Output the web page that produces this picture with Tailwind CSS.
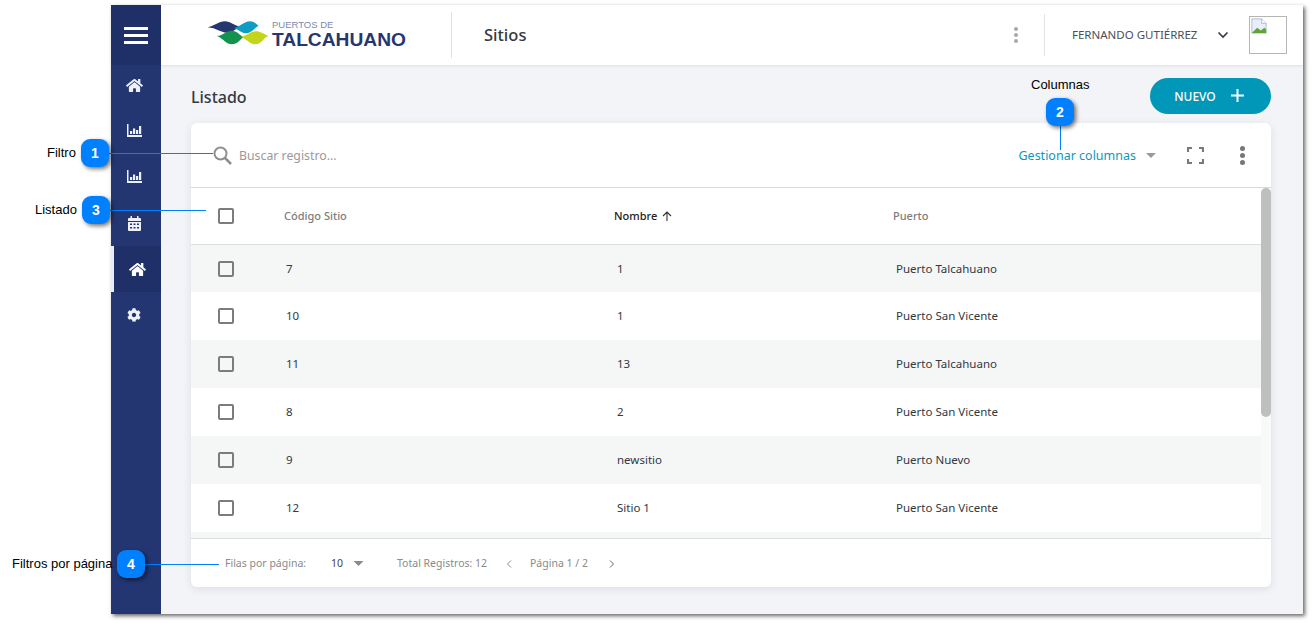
<!DOCTYPE html>
<html lang="en">
<head>
    <meta charset="UTF-8">
    <title>Sitios</title>
    <script src="https://cdn.jsdelivr.net/npm/@tailwindcss/browser@4"></script>
</head>
<body class="bg-white font-['Noto_Sans',sans-serif] overflow-hidden h-[623px] relative">
    <!-- app window -->
    <div class="ml-[111px] mt-[5px] w-[1192px] h-[609px] flex bg-[#f3f4f7] shadow-[2px_2px_4px_rgba(0,0,0,0.6)]">
        <!-- sidebar -->
        <div class="w-[50px] shrink-0 bg-[#233672] flex flex-col text-white">
            <div class="h-[60px] bg-[#1f2f68] flex items-center justify-center">
                <div class="w-[24px] flex flex-col gap-[4px]">
                    <div class="h-[3px] bg-white"></div>
                    <div class="h-[3px] bg-white"></div>
                    <div class="h-[3px] bg-white"></div>
                </div>
            </div>
            <div class="h-[40px] flex items-center justify-center pr-[4px]">
                <svg class="w-[17px] h-[15px]" viewBox="0 0 576 512" fill="#eef1fb"><path d="M280.37 148.26L96 300.11V464a16 16 0 0 0 16 16l112.06-.29a16 16 0 0 0 15.92-16V368a16 16 0 0 1 16-16h64a16 16 0 0 1 16 16v95.64a16 16 0 0 0 16 16.05L464 480a16 16 0 0 0 16-16V300L295.67 148.26a12.19 12.19 0 0 0-15.3 0zM571.6 251.47L488 182.56V44.05a12 12 0 0 0-12-12h-56a12 12 0 0 0-12 12v72.61L318.47 43a48 48 0 0 0-61 0L4.34 251.47a12 12 0 0 0-1.6 16.9l25.5 31A12 12 0 0 0 45.15 301l235.22-193.74a12.19 12.19 0 0 1 15.3 0L530.9 301a12 12 0 0 0 16.9-1.6l25.5-31a12 12 0 0 0-1.7-16.93z"/></svg>
            </div>
            <div class="h-[50px] flex items-center justify-center pr-[4px]">
                <svg class="w-[15px] h-[13px]" viewBox="0 0 15 13" fill="#eef1fb"><path d="M0 0h1.500v11H15v2H0z"/><rect x="3" y="7" width="2.200" height="3"/><rect x="6" y="4.500" width="2.200" height="5.500"/><rect x="9" y="6" width="2.200" height="4"/><rect x="12" y="2" width="2.200" height="8"/></svg>
            </div>
            <div class="h-[42px] flex items-center justify-center pr-[4px]">
                <svg class="w-[15px] h-[13px]" viewBox="0 0 15 13" fill="#eef1fb"><path d="M0 0h1.500v11H15v2H0z"/><rect x="3" y="7" width="2.200" height="3"/><rect x="6" y="4.500" width="2.200" height="5.500"/><rect x="9" y="6" width="2.200" height="4"/><rect x="12" y="2" width="2.200" height="8"/></svg>
            </div>
            <div class="h-[49px] flex items-center justify-center pr-[4px]">
                <svg class="w-[13px] h-[15px] mt-[3px]" viewBox="0 0 13 15" fill="#eef1fb"><path d="M2.500 0h1.500v2h5V0h1.500v2H12a1 1 0 0 1 1 1v2H0V3a1 1 0 0 1 1-1h1.500z"/><path fill-rule="evenodd" d="M0 6h13v8a1 1 0 0 1-1 1H1a1 1 0 0 1-1-1zM2 7.500v1.500h2V7.500zM5.500 7.500v1.500h2V7.500zM9 7.500v1.500h2V7.500zM2 11v1.500h2V11zM5.500 11v1.500h2V11zM9 11v1.500h2V11z"/></svg>
            </div>
            <div class="h-[46px] flex items-center justify-center bg-[#1f2f68] border-l-[3px] border-[#e8ecf7]">
                <svg class="w-[17px] h-[15px]" viewBox="0 0 576 512" fill="#ffffff"><path d="M280.37 148.26L96 300.11V464a16 16 0 0 0 16 16l112.06-.29a16 16 0 0 0 15.92-16V368a16 16 0 0 1 16-16h64a16 16 0 0 1 16 16v95.64a16 16 0 0 0 16 16.05L464 480a16 16 0 0 0 16-16V300L295.67 148.26a12.19 12.19 0 0 0-15.3 0zM571.6 251.47L488 182.56V44.05a12 12 0 0 0-12-12h-56a12 12 0 0 0-12 12v72.61L318.47 43a48 48 0 0 0-61 0L4.34 251.47a12 12 0 0 0-1.6 16.9l25.5 31A12 12 0 0 0 45.15 301l235.22-193.74a12.19 12.19 0 0 1 15.3 0L530.9 301a12 12 0 0 0 16.9-1.6l25.5-31a12 12 0 0 0-1.7-16.93z"/></svg>
            </div>
            <div class="h-[46px] flex items-center justify-center pr-[4px]">
                <svg class="w-[14px] h-[14px]" viewBox="0 0 512 512" fill="#eef1fb"><path d="M487.4 315.7l-42.6-24.6c4.3-23.2 4.3-47 0-70.2l42.6-24.6c4.9-2.8 7.1-8.6 5.5-14-11.1-35.6-30-67.8-54.7-94.6-3.8-4.1-10-5.1-14.8-2.3L380.8 110c-17.9-15.4-38.5-27.3-60.8-35.1V25.8c0-5.6-3.9-10.5-9.4-11.7-36.7-8.2-74.3-7.8-109.2 0-5.5 1.2-9.4 6.1-9.4 11.7V75c-22.2 7.9-42.8 19.8-60.8 35.1L88.7 85.5c-4.9-2.8-11-1.9-14.8 2.3-24.7 26.7-43.6 58.9-54.7 94.6-1.7 5.4.6 11.2 5.5 14L67.3 221c-4.3 23.2-4.3 47 0 70.2l-42.6 24.6c-4.9 2.8-7.1 8.6-5.5 14 11.1 35.6 30 67.8 54.7 94.6 3.8 4.1 10 5.1 14.8 2.3l42.6-24.6c17.9 15.4 38.5 27.3 60.8 35.1v49.2c0 5.6 3.9 10.5 9.4 11.7 36.7 8.2 74.3 7.8 109.2 0 5.5-1.2 9.4-6.1 9.4-11.7v-49.2c22.2-7.9 42.8-19.8 60.8-35.1l42.6 24.6c4.9 2.8 11 1.9 14.8-2.3 24.7-26.7 43.6-58.9 54.7-94.6 1.5-5.5-.7-11.3-5.6-14.1zM256 336c-44.1 0-80-35.9-80-80s35.9-80 80-80 80 35.9 80 80-35.9 80-80 80z"/></svg>
            </div>
        </div>

        <div class="flex-1 flex flex-col min-w-0">
            <!-- header -->
            <div class="h-[61px] bg-white flex items-center border-b border-[#e6e7ea] shadow-[0_1px_2px_rgba(0,0,0,0.05)]">
                <div class="w-[291px] h-[46px] flex items-center border-r border-[#dfe1e5] pl-[46px]">
                    <svg class="w-[62px] h-[25px] mb-[3px]" viewBox="21 27 185 75">
                        <path fill="#26376f" d="M22 46C40 44 55 28 75 28C90 28 100 40 120 44C105 52 95 62 80 62C60 62 50 48 22 46z"/>
                        <path fill="#0d9cc2" d="M100 48C120 46 130 28 150 28C158 28 165 32 175 42C165 44 158 62 138 64C125 64 115 52 100 48z"/>
                        <path fill="#14934f" d="M50 72C70 70 78 56 95 56C110 56 118 68 130 76C120 80 115 97 95 97C78 97 70 80 50 72z"/>
                        <path fill="#c2d41c" d="M122 74C140 72 150 58 168 58C180 58 190 66 205 72C190 76 185 97 165 97C150 97 140 82 122 74z"/>
                    </svg>
                    <div class="ml-[3px] flex flex-col mb-[3px]">
                        <span class="text-[9.500px] leading-[11px] text-[#7d88ad] font-['Liberation_Sans',sans-serif]">PUERTOS DE</span>
                        <span class="text-[19.200px] leading-[19px] font-bold text-[#26376f] font-['Liberation_Sans',sans-serif]">TALCAHUANO</span>
                    </div>
                </div>
                <div class="ml-[32px] mt-[1px] text-[16.500px] font-medium text-[#333842]">Sitios</div>
                <div class="ml-auto w-[5px] flex flex-col gap-[2px] items-center mr-[26px]">
                    <div class="w-[4px] h-[4px] rounded-full bg-[#a8a8a8]"></div>
                    <div class="w-[4px] h-[4px] rounded-full bg-[#a8a8a8]"></div>
                    <div class="w-[4px] h-[4px] rounded-full bg-[#a8a8a8]"></div>
                </div>
                <div class="h-[42px] border-l border-[#e1e3e6] flex items-center pl-[27px]">
                    <span class="text-[11.500px] text-[#4a4f5c] w-[126px] whitespace-nowrap">FERNANDO GUTIÉRREZ</span>
                    <svg class="w-[12px] h-[8px] ml-[19px]" viewBox="0 0 12 8" fill="none" stroke="#333842" stroke-width="1.600"><path d="M1.500 1.500 6 6l4.500-4.500"/></svg>
                    <div class="w-[38px] h-[38px] ml-[20px] mr-[16px] border border-[#b5b5b5] self-center relative">
                        <svg class="absolute left-[1px] top-[1px] w-[16px] h-[16px]" viewBox="0 0 18 18">
                            <path d="M1 1h11l5 5v11H1z" fill="#e8eefb" stroke="#b0b5c0"/>
                            <path d="M1 17l6-6 4 3 4-3 2 2v4z" fill="#5da53a"/>
                            <path d="M12 1v5h5" fill="#fff" stroke="#b0b5c0"/>
                        </svg>
                    </div>
                </div>
            </div>

            <!-- content -->
            <div class="flex-1 px-[30px] flex flex-col">
                <div class="h-[57px] w-[1080px] flex items-center justify-between">
                    <h1 class="text-[16px] font-medium text-[#333842] mt-[4px]">Listado</h1>
                    <button class="w-[121px] h-[36px] mt-[2px] pr-[3px] rounded-full bg-[#0097b9] text-white flex items-center justify-center gap-[15px] text-[12px] font-medium">
                        <span class="mt-[2px]">NUEVO</span>
                        <svg class="w-[13px] h-[13px]" viewBox="0 0 13 13" fill="none" stroke="#fff" stroke-width="2"><path d="M6.500 0v13M0 6.500h13"/></svg>
                    </button>
                </div>

                <!-- card -->
                <div class="w-[1080px] h-[464px] bg-white rounded-[6px] shadow-[0_2px_8px_rgba(60,70,120,0.12)] flex flex-col overflow-hidden">
                    <div class="h-[65px] shrink-0 border-b border-[#d8d9dc] flex items-center pl-[22px]">
                        <svg class="w-[19px] h-[19px]" viewBox="0 0 19 19" fill="none" stroke="#8f8f8f" stroke-width="2"><circle cx="7.500" cy="7.500" r="6"/><path d="M12 12l6 6" stroke-width="2.500"/></svg>
                        <span class="ml-[7px] mt-[2px] text-[12.300px] text-[#9a9a9a]">Buscar registro...</span>
                        <span class="ml-auto mt-[2px] text-[12.500px] text-[#0f97b8]">Gestionar columnas</span>
                        <svg class="w-[10px] h-[5px] ml-[10px]" viewBox="0 0 10 5" fill="#9a9a9a"><path d="M0 0h10L5 5z"/></svg>
                        <svg class="w-[17px] h-[17px] ml-[31px]" viewBox="0 0 17 17" fill="none" stroke="#7a7a7a" stroke-width="2.200"><path d="M1 5V1h4M12 1h4v4M16 12v4h-4M5 16H1v-4"/></svg>
                        <div class="w-[6px] flex flex-col gap-[2px] ml-[36px] mr-[25px]">
                            <div class="w-[5px] h-[5px] rounded-full bg-[#777]"></div>
                            <div class="w-[5px] h-[5px] rounded-full bg-[#777]"></div>
                            <div class="w-[5px] h-[5px] rounded-full bg-[#777]"></div>
                        </div>
                    </div>

                    <div class="flex-1 flex min-h-0">
                        <div class="flex-1 min-w-0">
                            <div class="h-[57px] border-b border-[#dcdde0] flex items-center text-[11px] font-medium text-[#7d7d7d]">
                                <div class="ml-[27px] w-[16px] h-[16px] border-2 border-[#7c7c7c] rounded-[2px] shrink-0"></div>
                                <div class="ml-[50px] w-[330px]">Código Sitio</div>
                                <div class="w-[279px] text-[#222] flex items-center gap-[5px]">Nombre
                                    <svg class="w-[10px] h-[10px]" viewBox="0 0 10 10" fill="none" stroke="#333" stroke-width="1.100"><path d="M5 10V1M1 5l4-4 4 4"/></svg>
                                </div>
                                <div>Puerto</div>
                            </div>
                            <div class="h-[47px] bg-[#f5f6f6] flex items-center text-[11.500px] text-[#333842]">
                                <div class="ml-[27px] w-[16px] h-[16px] border-2 border-[#7c7c7c] rounded-[2px] shrink-0"></div>
                                <div class="ml-[52px] w-[331px]">7</div><div class="w-[279px]">1</div><div>Puerto Talcahuano</div>
                            </div>
                            <div class="h-[48px] flex items-center text-[11.500px] text-[#333842]">
                                <div class="ml-[27px] w-[16px] h-[16px] border-2 border-[#7c7c7c] rounded-[2px] shrink-0"></div>
                                <div class="ml-[52px] w-[331px]">10</div><div class="w-[279px]">1</div><div>Puerto San Vicente</div>
                            </div>
                            <div class="h-[48px] bg-[#f5f6f6] flex items-center text-[11.500px] text-[#333842]">
                                <div class="ml-[27px] w-[16px] h-[16px] border-2 border-[#7c7c7c] rounded-[2px] shrink-0"></div>
                                <div class="ml-[52px] w-[331px]">11</div><div class="w-[279px]">13</div><div>Puerto Talcahuano</div>
                            </div>
                            <div class="h-[48px] flex items-center text-[11.500px] text-[#333842]">
                                <div class="ml-[27px] w-[16px] h-[16px] border-2 border-[#7c7c7c] rounded-[2px] shrink-0"></div>
                                <div class="ml-[52px] w-[331px]">8</div><div class="w-[279px]">2</div><div>Puerto San Vicente</div>
                            </div>
                            <div class="h-[48px] bg-[#f5f6f6] flex items-center text-[11.500px] text-[#333842]">
                                <div class="ml-[27px] w-[16px] h-[16px] border-2 border-[#7c7c7c] rounded-[2px] shrink-0"></div>
                                <div class="ml-[52px] w-[331px]">9</div><div class="w-[279px]">newsitio</div><div>Puerto Nuevo</div>
                            </div>
                            <div class="h-[48px] flex items-center text-[11.500px] text-[#333842]">
                                <div class="ml-[27px] w-[16px] h-[16px] border-2 border-[#7c7c7c] rounded-[2px] shrink-0"></div>
                                <div class="ml-[52px] w-[331px]">12</div><div class="w-[279px]">Sitio 1</div><div>Puerto San Vicente</div>
                            </div>
                            <div class="h-[6px] bg-[#f5f6f6]"></div>
                        </div>
                        <!-- scrollbar -->
                        <div class="w-[10px] shrink-0 bg-[#f9f9f9]">
                            <div class="h-[229px] bg-[#bfbfbf] rounded-[5px]"></div>
                        </div>
                    </div>

                    <div class="h-[49px] shrink-0 border-t border-[#dcdde0] pt-[1px] flex items-center text-[10.500px] text-[#8a8a8a]">
                        <span class="ml-[34px] w-[83px] whitespace-nowrap">Filas por página:</span>
                        <span class="ml-[23px] text-[#444]">10</span>
                        <svg class="w-[11px] h-[5px] ml-[10px]" viewBox="0 0 10 5" fill="#8a8a8a"><path d="M0 0h10L5 5z"/></svg>
                        <span class="ml-[33px] w-[90px] whitespace-nowrap">Total Registros: 12</span>
                        <svg class="w-[6px] h-[8px] ml-[19px]" viewBox="0 0 6 8" fill="none" stroke="#8a8a8a"><path d="M5 .5 1.500 4 5 7.500"/></svg>
                        <span class="ml-[18px] w-[62px] whitespace-nowrap">Página 1 / 2</span>
                        <svg class="w-[6px] h-[8px] ml-[17px]" viewBox="0 0 6 8" fill="none" stroke="#666"><path d="M1 .5 4.500 4 1 7.500"/></svg>
                    </div>
                </div>
            </div>
        </div>
    </div>

    <!-- annotation callouts over the screenshot -->
    <span class="absolute left-[47px] top-[146px] text-[13px] leading-[14px] text-black font-['Liberation_Sans',sans-serif]">Filtro</span>
    <div class="absolute left-[109px] top-[153px] w-[104px] h-px bg-[#0080ff]"></div>
    <div class="absolute left-[81px] top-[139px] w-[28px] h-[28px] rounded-[9px] bg-[#0080ff] text-white text-[14px] font-bold flex items-center justify-center shadow-[2px_2px_4px_rgba(0,0,0,0.55)] font-['Liberation_Sans',sans-serif]">1</div>

    <span class="absolute left-[35px] top-[203px] text-[13px] leading-[14px] text-black font-['Liberation_Sans',sans-serif]">Listado</span>
    <div class="absolute left-[110px] top-[210px] w-[96px] h-px bg-[#0080ff]"></div>
    <div class="absolute left-[82px] top-[196px] w-[28px] h-[28px] rounded-[9px] bg-[#0080ff] text-white text-[14px] font-bold flex items-center justify-center shadow-[2px_2px_4px_rgba(0,0,0,0.55)] font-['Liberation_Sans',sans-serif]">3</div>

    <span class="absolute left-[1031px] top-[78px] text-[13px] leading-[14px] text-black font-['Liberation_Sans',sans-serif]">Columnas</span>
    <div class="absolute left-[1060px] top-[126px] w-px h-[24px] bg-[#0080ff]"></div>
    <div class="absolute left-[1046px] top-[98px] w-[28px] h-[28px] rounded-[9px] bg-[#0080ff] text-white text-[14px] font-bold flex items-center justify-center shadow-[2px_2px_4px_rgba(0,0,0,0.55)] font-['Liberation_Sans',sans-serif]">2</div>

    <span class="absolute left-[12px] top-[557px] text-[13px] leading-[14px] text-black font-['Liberation_Sans',sans-serif] whitespace-nowrap">Filtros por página</span>
    <div class="absolute left-[145px] top-[564px] w-[74px] h-px bg-[#0080ff]"></div>
    <div class="absolute left-[117px] top-[550px] w-[28px] h-[28px] rounded-[9px] bg-[#0080ff] text-white text-[14px] font-bold flex items-center justify-center shadow-[2px_2px_4px_rgba(0,0,0,0.55)] font-['Liberation_Sans',sans-serif]">4</div>
</body>
</html>
